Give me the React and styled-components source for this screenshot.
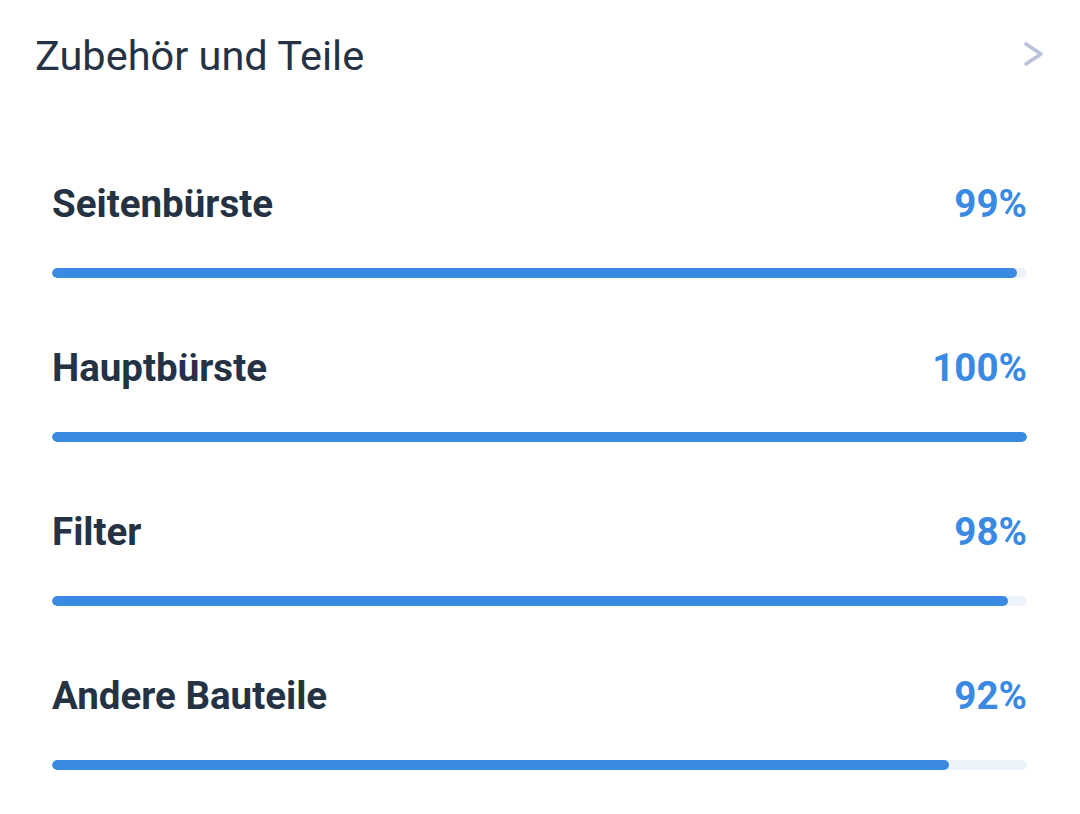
import React from "react";
import styled, { createGlobalStyle } from "styled-components";

const Global = createGlobalStyle`
  html, body { margin: 0; padding: 0; background: #ffffff; }
  body { font-family: Roboto, "Noto Sans", sans-serif; }
`;

const Page = styled.div`
  width: 1080px;
  height: 814px;
  box-sizing: border-box;
  padding: 31px 36px 0 35px;
  background: #ffffff;
`;

const Header = styled.div`
  display: flex;
  align-items: center;
  justify-content: space-between;
  height: 50px;
`;

const Title = styled.h1`
  margin: 0;
  font-family: Roboto, sans-serif;
  font-weight: 400;
  font-size: 41.5px;
  line-height: 50px;
  color: #243244;
`;

const Chevron = styled.svg`
  width: 24px;
  height: 30px;
  margin-right: -2px;
  margin-top: -4px;
`;

const List = styled.div`
  display: flex;
  flex-direction: column;
  padding: 0 17px;
  margin-top: 100px;
`;

const Item = styled.div`
  display: flex;
  flex-direction: column;
  height: 164px;
`;

const Row = styled.div`
  display: flex;
  justify-content: space-between;
  align-items: baseline;
  height: 46px;
  line-height: 46px;
`;

const Label = styled.span`
  font-family: Roboto, sans-serif;
  font-weight: 700;
  font-size: 38.5px;
  color: #243244;
`;

const Value = styled.span`
  font-family: Roboto, sans-serif;
  font-weight: 700;
  font-size: 38.5px;
  color: #3a8ae4;
`;

const Track = styled.div`
  margin-top: 41px;
  height: 10px;
  border-radius: 5px;
  background: #edf3fb;
  overflow: hidden;
`;

const Fill = styled.div`
  height: 100%;
  border-radius: 5px;
  background: #3a8ae4;
`;

const items = [
  { name: "Seitenbürste", value: 99 },
  { name: "Hauptbürste", value: 100 },
  { name: "Filter", value: 98 },
  { name: "Andere Bauteile", value: 92 },
];

export default function App() {
  return (
    <>
      <Global />
      <Page>
        <Header>
          <Title>Zubehör und Teile</Title>
          <Chevron viewBox="0 0 24 30">
            <path d="M4 5 L19 15 L4 25" fill="none" stroke="#b8c3da" strokeWidth="3.8" strokeLinecap="round" strokeLinejoin="round" />
          </Chevron>
        </Header>
        <List>
          {items.map((it) => (
            <Item key={it.name}>
              <Row>
                <Label>{it.name}</Label>
                <Value>{it.value}%</Value>
              </Row>
              <Track>
                <Fill style={{ width: `${it.value}%` }} />
              </Track>
            </Item>
          ))}
        </List>
      </Page>
    </>
  );
}
